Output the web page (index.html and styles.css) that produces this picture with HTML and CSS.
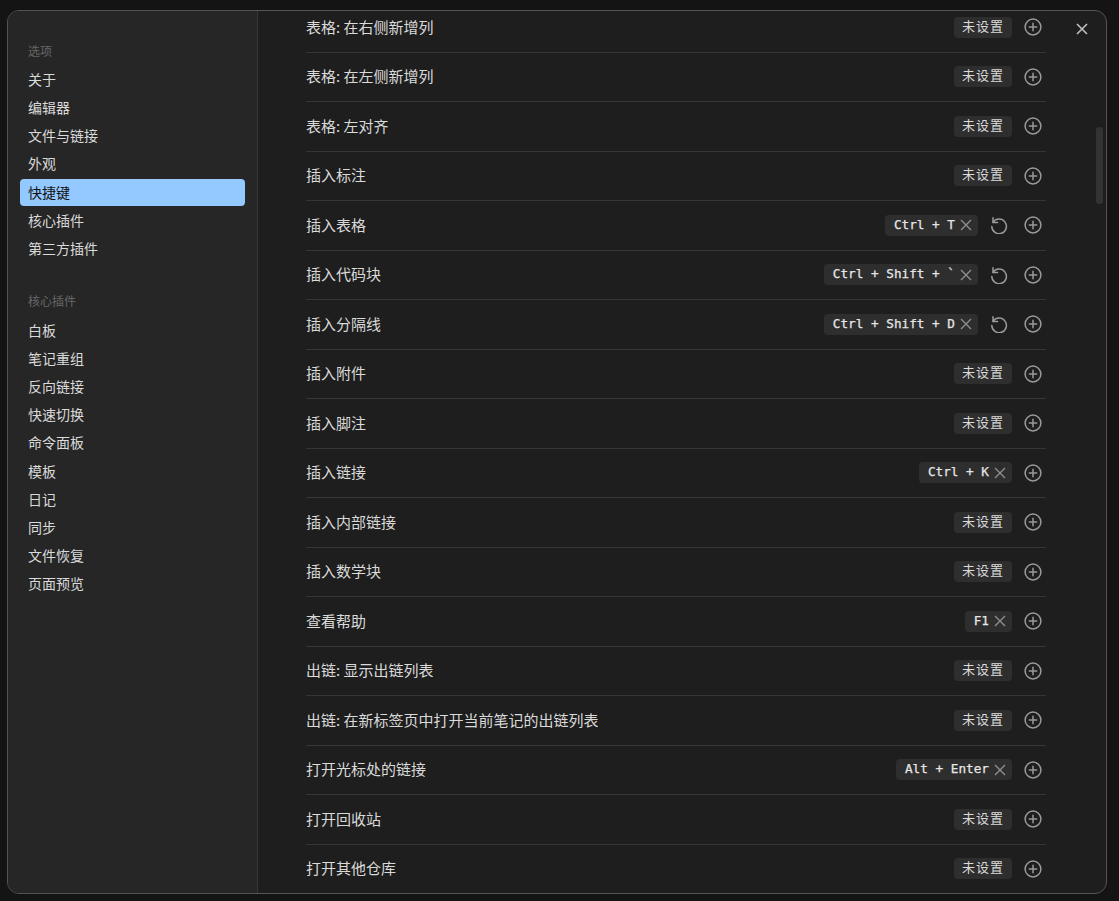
FILE: index.html
```html
<!DOCTYPE html>
<html lang="zh-CN">
<head>
<meta charset="utf-8">
<title>快捷键</title>
<link rel="stylesheet" href="styles.css">
</head>
<body>
<svg class="defs" width="0" height="0" aria-hidden="true">
  <symbol id="plus" viewBox="0 0 18 18"><circle cx="9" cy="9" r="7.9"/><path d="M9 5.3v7.4M5.3 9h7.4"/></symbol>
  <symbol id="reset" viewBox="0 0 18 18"><path d="M3 1.8v4.6h4.6"/><path d="M3 6.4A7.3 7.3 0 1 1 1.8 10.6"/></symbol>
  <symbol id="x" viewBox="0 0 14 14"><path d="M2 2l10 10M12 2L2 12"/></symbol>
</svg>
<div class="modal">
  <nav class="sidebar">
    <div class="heading">选项</div>
    <div class="item">关于</div>
    <div class="item">编辑器</div>
    <div class="item">文件与链接</div>
    <div class="item">外观</div>
    <div class="item active">快捷键</div>
    <div class="item">核心插件</div>
    <div class="item">第三方插件</div>
    <div class="heading second">核心插件</div>
    <div class="item">白板</div>
    <div class="item">笔记重组</div>
    <div class="item">反向链接</div>
    <div class="item">快速切换</div>
    <div class="item">命令面板</div>
    <div class="item">模板</div>
    <div class="item">日记</div>
    <div class="item">同步</div>
    <div class="item">文件恢复</div>
    <div class="item">页面预览</div>
  </nav>
  <main class="content">
    <div class="list">
      <div class="row first"><span class="name">表格: 在右侧新增列</span><div class="controls"><span class="chip">未设置</span><button class="btn"><svg class="ic"><use href="#plus"/></svg></button></div></div>
      <div class="row"><span class="name">表格: 在左侧新增列</span><div class="controls"><span class="chip">未设置</span><button class="btn"><svg class="ic"><use href="#plus"/></svg></button></div></div>
      <div class="row"><span class="name">表格: 左对齐</span><div class="controls"><span class="chip">未设置</span><button class="btn"><svg class="ic"><use href="#plus"/></svg></button></div></div>
      <div class="row"><span class="name">插入标注</span><div class="controls"><span class="chip">未设置</span><button class="btn"><svg class="ic"><use href="#plus"/></svg></button></div></div>
      <div class="row"><span class="name">插入表格</span><div class="controls"><span class="chip key">Ctrl + T<svg class="cx"><use href="#x"/></svg></span><button class="btn"><svg class="ic"><use href="#reset"/></svg></button><button class="btn"><svg class="ic"><use href="#plus"/></svg></button></div></div>
      <div class="row"><span class="name">插入代码块</span><div class="controls"><span class="chip key">Ctrl + Shift + `<svg class="cx"><use href="#x"/></svg></span><button class="btn"><svg class="ic"><use href="#reset"/></svg></button><button class="btn"><svg class="ic"><use href="#plus"/></svg></button></div></div>
      <div class="row"><span class="name">插入分隔线</span><div class="controls"><span class="chip key">Ctrl + Shift + D<svg class="cx"><use href="#x"/></svg></span><button class="btn"><svg class="ic"><use href="#reset"/></svg></button><button class="btn"><svg class="ic"><use href="#plus"/></svg></button></div></div>
      <div class="row"><span class="name">插入附件</span><div class="controls"><span class="chip">未设置</span><button class="btn"><svg class="ic"><use href="#plus"/></svg></button></div></div>
      <div class="row"><span class="name">插入脚注</span><div class="controls"><span class="chip">未设置</span><button class="btn"><svg class="ic"><use href="#plus"/></svg></button></div></div>
      <div class="row"><span class="name">插入链接</span><div class="controls"><span class="chip key">Ctrl + K<svg class="cx"><use href="#x"/></svg></span><button class="btn"><svg class="ic"><use href="#plus"/></svg></button></div></div>
      <div class="row"><span class="name">插入内部链接</span><div class="controls"><span class="chip">未设置</span><button class="btn"><svg class="ic"><use href="#plus"/></svg></button></div></div>
      <div class="row"><span class="name">插入数学块</span><div class="controls"><span class="chip">未设置</span><button class="btn"><svg class="ic"><use href="#plus"/></svg></button></div></div>
      <div class="row"><span class="name">查看帮助</span><div class="controls"><span class="chip key">F1<svg class="cx"><use href="#x"/></svg></span><button class="btn"><svg class="ic"><use href="#plus"/></svg></button></div></div>
      <div class="row"><span class="name">出链: 显示出链列表</span><div class="controls"><span class="chip">未设置</span><button class="btn"><svg class="ic"><use href="#plus"/></svg></button></div></div>
      <div class="row"><span class="name">出链: 在新标签页中打开当前笔记的出链列表</span><div class="controls"><span class="chip">未设置</span><button class="btn"><svg class="ic"><use href="#plus"/></svg></button></div></div>
      <div class="row"><span class="name">打开光标处的链接</span><div class="controls"><span class="chip key">Alt + Enter<svg class="cx"><use href="#x"/></svg></span><button class="btn"><svg class="ic"><use href="#plus"/></svg></button></div></div>
      <div class="row"><span class="name">打开回收站</span><div class="controls"><span class="chip">未设置</span><button class="btn"><svg class="ic"><use href="#plus"/></svg></button></div></div>
      <div class="row"><span class="name">打开其他仓库</span><div class="controls"><span class="chip">未设置</span><button class="btn"><svg class="ic"><use href="#plus"/></svg></button></div></div>
    </div>
  </main>
  <button class="close"><svg class="closeic"><use href="#x"/></svg></button>
  <div class="thumb"></div>
</div>
</body>
</html>
```
FILE: styles.css
```css
* { box-sizing: border-box; }
html, body { height: 100%; }
body {
  margin: 0;
  padding: 10px 12px 7px 7px;
  background: #141414;
  overflow: hidden;
  font-family: "Noto Sans CJK SC", "Liberation Sans", sans-serif;
}
.defs { position: absolute; }
.modal {
  position: relative;
  display: flex;
  height: 100%;
  border: 1px solid #545454;
  border-radius: 12px;
  overflow: hidden;
  background: #1e1e1e;
}
.sidebar {
  flex: none;
  width: 250px;
  padding: 27px 12px 0;
  background: #262626;
  border-right: 1px solid #363636;
}
.heading {
  height: 28px;
  line-height: 26px;
  padding-left: 8px;
  font-size: 12px;
  color: #666;
}
.heading.second { margin-top: 26px; height: 29px; }
.item {
  height: 27px;
  line-height: 27px;
  margin-bottom: 1.15px;
  padding-left: 8px;
  border-radius: 4px;
  font-size: 14px;
  color: #dadada;
}
.item.active { background: #93c9ff; color: #111; }
.content {
  flex: 1;
  min-width: 0;
  overflow: hidden;
  padding: 0 60px 0 48px;
}
.list { margin-top: -9px; }
.row {
  display: flex;
  align-items: center;
  justify-content: space-between;
  height: 49.5px;
  border-top: 1px solid #363636;
}
.row.first { border-top-color: transparent; }
.name { font-size: 15px; padding-bottom: 2px; color: #dadada; }
.controls { display: flex; align-items: center; }
.chip {
  display: flex;
  align-items: center;
  height: 21px;
  padding: 0 8px 4px;
  border-radius: 4px;
  background: #2e2e2e;
  font-size: 13px;
  line-height: 17px;
  color: #dadada;
  letter-spacing: 1px;
  white-space: pre;
}
.chip.key {
  padding: 0 4px 2px 8.5px;
  font-family: "DejaVu Sans Mono", "Liberation Mono", monospace;
  font-size: 12.7px;
  letter-spacing: 0;
  color: #e6e6e6;
  -webkit-text-stroke: 0.25px #e6e6e6;
}
.cx {
  width: 14px;
  height: 14px;
  margin: 2px 1px 0 4px;
  fill: none;
  stroke: #8e8e8e;
  stroke-width: 1.4;
}
.btn {
  display: flex;
  align-items: center;
  justify-content: center;
  width: 26px;
  height: 26px;
  margin-left: 8px;
  padding: 0;
  border: 0;
  background: none;
}
.ic {
  width: 18px;
  height: 18px;
  fill: none;
  stroke: #9a9a9a;
  stroke-width: 1.5;
  stroke-linecap: round;
  stroke-linejoin: round;
}
.close {
  position: absolute;
  top: 8px;
  right: 14px;
  display: flex;
  align-items: center;
  justify-content: center;
  width: 20px;
  height: 20px;
  padding: 0;
  border: 0;
  background: none;
}
.closeic {
  width: 14px;
  height: 14px;
  fill: none;
  stroke: #c0c0c0;
  stroke-width: 1.6;
}
.thumb {
  position: absolute;
  top: 116px;
  right: 3px;
  width: 7px;
  height: 77px;
  border-radius: 3px;
  background: #333;
}
```
